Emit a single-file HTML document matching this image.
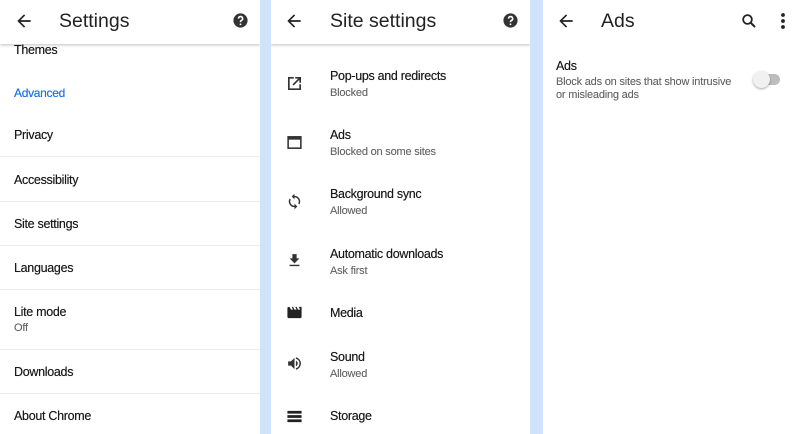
<!DOCTYPE html>
<html><head><meta charset="utf-8"><style>
*{margin:0;padding:0;box-sizing:border-box}
body{width:800px;height:434px;overflow:hidden;background:#cfe3fa;font-family:"Liberation Sans",sans-serif;position:relative;color:#202124}
.p{position:absolute;top:0;height:434px;background:#fff;overflow:hidden}
.hd{position:absolute;left:0;right:0;top:0;height:44px;background:#fff;box-shadow:0 1px 3px rgba(0,0,0,.25);z-index:2}
.t{position:absolute;font-size:12.5px;color:#1a1a1a;white-space:nowrap;letter-spacing:-.3px;text-shadow:0 0 .4px #333}
.s{position:absolute;font-size:11px;color:#666;white-space:nowrap;letter-spacing:-.2px;text-shadow:0 0 .3px #888}
.ht{position:absolute;top:10px;font-size:19.5px;color:#222}
.d{position:absolute;left:0;right:0;height:1px;background:#ececec}
svg{position:absolute}
</style></head><body>
<div class="p" style="left:0;width:260px">
 <div class="hd">
  <svg style="left:14px;top:11px" width="20" height="20" viewBox="0 0 24 24"><path d="M20 11H7.8l5.6-5.6L12 4l-8 8 8 8 1.4-1.4L7.8 13H20z" fill="#222"/></svg>
  <div class="ht" style="left:59px">Settings</div>
  <svg style="left:232px;top:12px" width="17" height="17" viewBox="0 0 24 24"><circle cx="12" cy="12" r="10" fill="#333"/><path d="M9.2 9.3a2.9 2.9 0 1 1 4 2.7c-.8.4-1.2.9-1.2 1.8v.5" stroke="#fff" stroke-width="2.2" fill="none"/><circle cx="12" cy="17.3" r="1.3" fill="#fff"/></svg>
 </div>
 <div class="t" style="left:14px;top:43px">Themes</div>
 <div class="t" style="left:14px;top:86px;color:#1a73e8;font-size:12px;text-shadow:0 0 .4px #1a73e8">Advanced</div>
 <div class="t" style="left:14px;top:128px">Privacy</div>
 <div class="d" style="top:156px"></div>
 <div class="t" style="left:14px;top:173px">Accessibility</div>
 <div class="d" style="top:201px"></div>
 <div class="t" style="left:14px;top:217px">Site settings</div>
 <div class="d" style="top:245px"></div>
 <div class="t" style="left:14px;top:261px">Languages</div>
 <div class="d" style="top:289px"></div>
 <div class="t" style="left:14px;top:305px">Lite mode</div>
 <div class="s" style="left:14px;top:322px">Off</div>
 <div class="d" style="top:349px"></div>
 <div class="t" style="left:14px;top:365px">Downloads</div>
 <div class="d" style="top:393px"></div>
 <div class="t" style="left:14px;top:409px">About Chrome</div>
</div>
<div class="p" style="left:271px;width:259px">
 <div class="hd">
  <svg style="left:13px;top:11px" width="20" height="20" viewBox="0 0 24 24"><path d="M20 11H7.8l5.6-5.6L12 4l-8 8 8 8 1.4-1.4L7.8 13H20z" fill="#222"/></svg>
  <div class="ht" style="left:59px">Site settings</div>
  <svg style="left:231px;top:12px" width="17" height="17" viewBox="0 0 24 24"><circle cx="12" cy="12" r="10" fill="#333"/><path d="M9.2 9.3a2.9 2.9 0 1 1 4 2.7c-.8.4-1.2.9-1.2 1.8v.5" stroke="#fff" stroke-width="2.2" fill="none"/><circle cx="12" cy="17.3" r="1.3" fill="#fff"/></svg>
 </div>
 <svg style="left:15px;top:75px" width="17" height="17" viewBox="0 0 24 24"><path d="M11 4H4v16h16v-7M10 14L20 4M13 4h7v7" stroke="#333" stroke-width="2.4" fill="none"/></svg>
 <div class="t" style="left:59px;top:69px">Pop-ups and redirects</div><div class="s" style="left:59px;top:87px">Blocked</div>
 <svg style="left:15px;top:134px" width="17" height="17" viewBox="0 0 24 24"><rect x="3" y="4" width="18" height="16" stroke="#333" stroke-width="2.2" fill="none"/><rect x="3" y="4" width="18" height="4" fill="#333"/></svg>
 <div class="t" style="left:59px;top:128px">Ads</div><div class="s" style="left:59px;top:146px">Blocked on some sites</div>
 <svg style="left:15px;top:193px" width="17" height="17" viewBox="0 0 24 24"><path d="M12 4V1L8 5l4 4V6c3.3 0 6 2.7 6 6 0 1-.3 2-.7 2.8l1.5 1.5A8 8 0 0 0 12 4zm0 14c-3.3 0-6-2.7-6-6 0-1 .3-2 .7-2.8L5.2 7.7A8 8 0 0 0 12 20v3l4-4-4-4z" fill="#333"/></svg>
 <div class="t" style="left:59px;top:187px">Background sync</div><div class="s" style="left:59px;top:205px">Allowed</div>
 <svg style="left:15px;top:252px" width="17" height="17" viewBox="0 0 24 24"><path d="M19 9h-4V3H9v6H5l7 7zM5 18v2h14v-2z" fill="#333"/></svg>
 <div class="t" style="left:59px;top:247px">Automatic downloads</div><div class="s" style="left:59px;top:265px">Ask first</div>
 <svg style="left:14px;top:304px" width="19" height="17" viewBox="0 0 24 24"><path d="M18 4l2 4h-3l-2-4h-2l2 4h-3l-2-4H8l2 4H7L5 4H4a2 2 0 0 0-2 2v12a2 2 0 0 0 2 2h16a2 2 0 0 0 2-2V4z" fill="#222"/></svg>
 <div class="t" style="left:59px;top:306px">Media</div>
 <svg style="left:15px;top:355px" width="17" height="17" viewBox="0 0 24 24"><path d="M3 9v6h4l5 5V4L7 9zm13.5 3A4.5 4.5 0 0 0 14 8v8a4.5 4.5 0 0 0 2.5-4zM14 3.2v2.1a7 7 0 0 1 0 13.4v2.1a9 9 0 0 0 0-17.6z" fill="#333"/></svg>
 <div class="t" style="left:59px;top:350px">Sound</div><div class="s" style="left:59px;top:368px">Allowed</div>
 <svg style="left:15px;top:408px" width="17" height="17" viewBox="0 0 24 24"><path d="M2 20h20v-4H2zm0-16v4h20V4zm0 10h20v-4H2z" fill="#222"/></svg>
 <div class="t" style="left:59px;top:409px">Storage</div>
</div>
<div class="p" style="left:543px;width:257px">
 <svg style="left:13px;top:11px" width="20" height="20" viewBox="0 0 24 24"><path d="M20 11H7.8l5.6-5.6L12 4l-8 8 8 8 1.4-1.4L7.8 13H20z" fill="#222"/></svg>
 <div class="ht" style="left:58px">Ads</div>
 <svg style="left:197px;top:12px" width="18" height="18" viewBox="0 0 24 24"><circle cx="10" cy="10" r="5.8" stroke="#222" stroke-width="2.4" fill="none"/><path d="M14 14l6 6" stroke="#222" stroke-width="2.6"/></svg>
 <svg style="left:236px;top:12px" width="8" height="18" viewBox="0 0 8 18"><circle cx="4" cy="3" r="1.9" fill="#222"/><circle cx="4" cy="9" r="1.9" fill="#222"/><circle cx="4" cy="15" r="1.9" fill="#222"/></svg>
 <div class="t" style="left:13px;top:59px">Ads</div>
 <div class="s" style="left:13px;top:76px;line-height:13px">Block ads on sites that show intrusive<br>or misleading ads</div>
 <div style="position:absolute;left:214px;top:74px;width:23px;height:11px;border-radius:6px;background:#bdbdbd"></div>
 <div style="position:absolute;left:210px;top:71px;width:17px;height:17px;border-radius:50%;background:#f1f1f1;box-shadow:0 1px 2px rgba(0,0,0,.35)"></div>
</div>
</body></html>
